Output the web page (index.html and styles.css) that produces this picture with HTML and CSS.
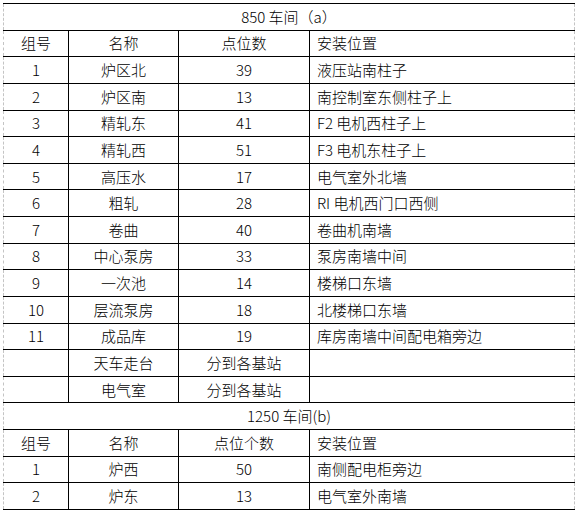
FILE: index.html
```html
<!DOCTYPE html>
<html lang="zh">
<head>
<meta charset="utf-8">
<link rel="stylesheet" href="styles.css">
</head>
<body>
<table class="grid">
  <colgroup>
    <col class="c1"><col class="c2"><col class="c3"><col class="c4">
  </colgroup>
  <tr><td class="title" colspan="4">850 车间（a）</td></tr>
  <tr><td>组号</td><td>名称</td><td>点位数</td><td class="loc">安装位置</td></tr>
  <tr><td>1</td><td>炉区北</td><td>39</td><td class="loc">液压站南柱子</td></tr>
  <tr><td>2</td><td>炉区南</td><td>13</td><td class="loc">南控制室东侧柱子上</td></tr>
  <tr><td>3</td><td>精轧东</td><td>41</td><td class="loc">F2 电机西柱子上</td></tr>
  <tr><td>4</td><td>精轧西</td><td>51</td><td class="loc">F3 电机东柱子上</td></tr>
  <tr><td>5</td><td>高压水</td><td>17</td><td class="loc">电气室外北墙</td></tr>
  <tr><td>6</td><td>粗轧</td><td>28</td><td class="loc">RI 电机西门口西侧</td></tr>
  <tr><td>7</td><td>卷曲</td><td>40</td><td class="loc">卷曲机南墙</td></tr>
  <tr><td>8</td><td>中心泵房</td><td>33</td><td class="loc">泵房南墙中间</td></tr>
  <tr><td>9</td><td>一次池</td><td>14</td><td class="loc">楼梯口东墙</td></tr>
  <tr><td>10</td><td>层流泵房</td><td>18</td><td class="loc">北楼梯口东墙</td></tr>
  <tr><td>11</td><td>成品库</td><td>19</td><td class="loc">库房南墙中间配电箱旁边</td></tr>
  <tr><td></td><td>天车走台</td><td>分到各基站</td><td class="loc"></td></tr>
  <tr><td></td><td>电气室</td><td>分到各基站</td><td class="loc"></td></tr>
  <tr><td class="title" colspan="4">1250 车间(b)</td></tr>
  <tr><td>组号</td><td>名称</td><td>点位个数</td><td class="loc">安装位置</td></tr>
  <tr><td>1</td><td>炉西</td><td>50</td><td class="loc">南侧配电柜旁边</td></tr>
  <tr><td>2</td><td>炉东</td><td>13</td><td class="loc">电气室外南墙</td></tr>
</table>
</body>
</html>
```

FILE: styles.css
```css
html, body {
  margin: 0;
  padding: 0;
  background: #fff;
}
body {
  padding: 3px 0 0 3px;
  font-family: "Noto Sans CJK SC", "Noto Sans", sans-serif;
  font-size: 15px;
  font-weight: 300;
  color: #000;
}
.grid {
  border-collapse: collapse;
  table-layout: fixed;
  width: 571px;
}
.c1 { width: 65px; }
.c2 { width: 110px; }
.c3 { width: 131px; }
.c4 { width: 265px; }
.grid tr {
  height: 26.63px;
}
.grid td {
  border: 1px solid #000;
  padding: 0;
  text-align: center;
  vertical-align: middle;
  line-height: 18px;
  white-space: nowrap;
}
.grid td:first-child {
  border-left: 1px dashed #c4c4c4;
}
.grid td:last-child {
  border-right: 1px dashed #c4c4c4;
}
.grid td.loc {
  text-align: left;
  padding-left: 7px;
}
```
